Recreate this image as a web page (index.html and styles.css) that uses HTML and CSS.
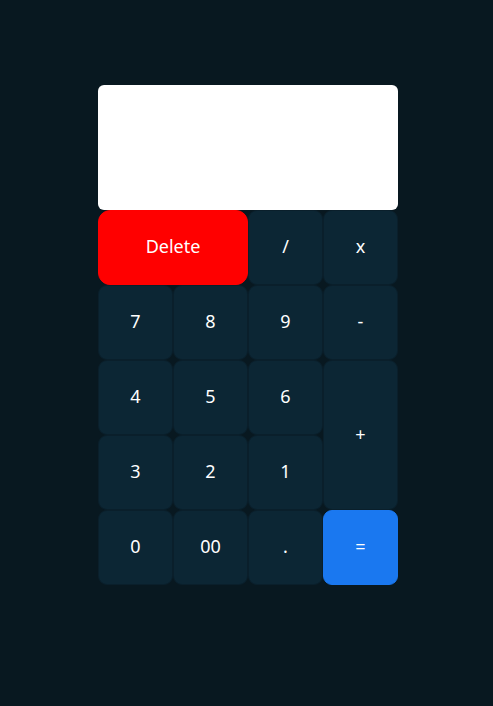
FILE: index.html
```html
<!DOCTYPE html>
<html>
<head>
<meta charset="utf-8">
<link rel="stylesheet" href="styles.css">
</head>
<body>
<div class="calc">
  <div class="display"></div>
  <div class="keys">
    <button class="key del">Delete</button>
    <button class="key">/</button>
    <button class="key">x</button>
    <button class="key">7</button>
    <button class="key">8</button>
    <button class="key">9</button>
    <button class="key">-</button>
    <button class="key">4</button>
    <button class="key">5</button>
    <button class="key">6</button>
    <button class="key plus">+</button>
    <button class="key">3</button>
    <button class="key">2</button>
    <button class="key">1</button>
    <button class="key">0</button>
    <button class="key">00</button>
    <button class="key">.</button>
    <button class="key eq">=</button>
  </div>
</div>
</body>
</html>
```
FILE: styles.css
```css
html, body {
  margin: 0;
  padding: 0;
  background: #081820;
  height: 100%;
}
body {
  padding: 85px 0 0 98px;
  box-sizing: border-box;
  font-family: "Noto Sans", "Open Sans", sans-serif;
}
.calc {
  width: 300px;
}
.display {
  height: 125px;
  background: #ffffff;
  border-radius: 6px;
}
.keys {
  display: grid;
  grid-template-columns: repeat(4, 75px);
  grid-auto-rows: 75px;
}
.key {
  margin: 0;
  padding: 0 0 3px 0;
  border: 1px solid #0a1f2b;
  border-radius: 9px;
  background: #0c2634;
  color: #ffffff;
  font-family: "Noto Sans", "Open Sans", sans-serif;
  font-size: 18px;
  display: flex;
  align-items: center;
  justify-content: center;
}
.del {
  grid-column: span 2;
  background: #ff0000;
  border-color: #ff0000;
  border-radius: 12px;
}
.plus {
  grid-row: span 2;
}
.eq {
  background: #1a78f0;
  border-color: #1a78f0;
}
```
